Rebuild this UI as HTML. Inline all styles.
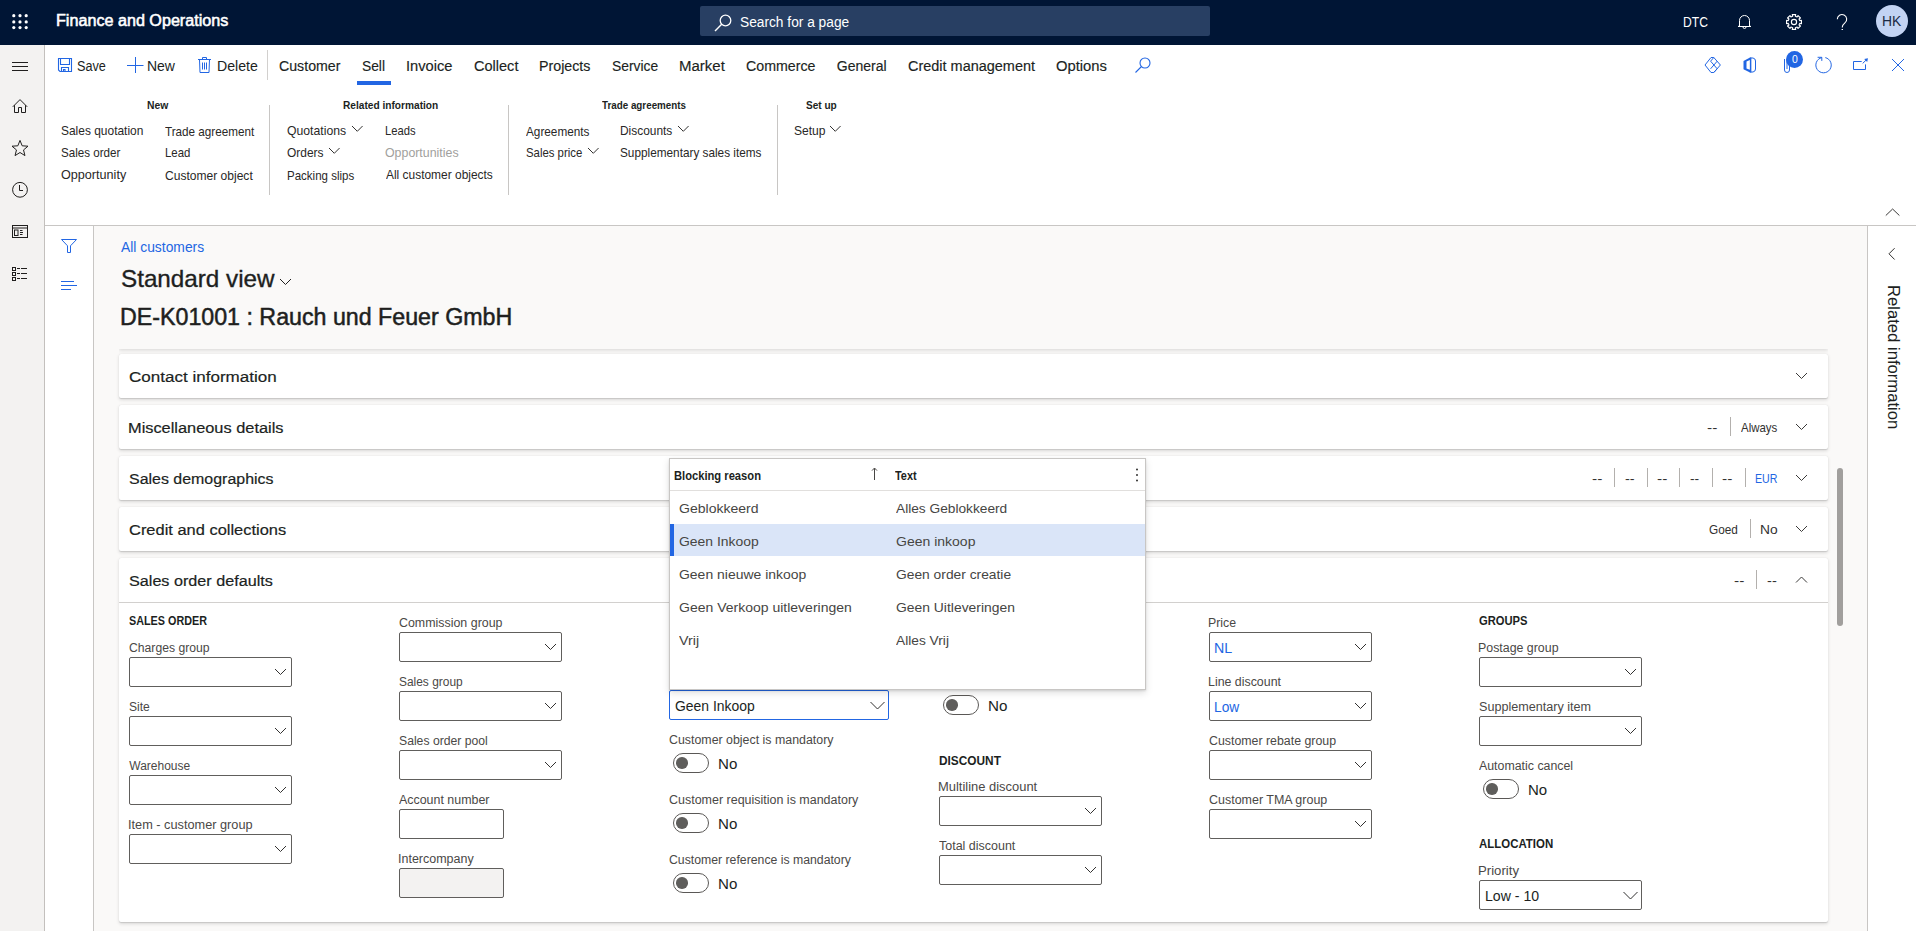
<!DOCTYPE html>
<html><head><meta charset="utf-8"><title>Finance and Operations</title>
<style>
html,body{margin:0;padding:0}
body{width:1916px;height:931px;position:relative;overflow:hidden;background:#faf9f8;font-family:"Liberation Sans",sans-serif}
.t{position:absolute;white-space:nowrap;line-height:1;transform-origin:0 0}
svg{overflow:visible}
</style></head><body>
<div style="position:absolute;left:0px;top:0px;width:1916px;height:45px;background:#001535"></div>
<svg style="position:absolute;left:0px;top:0px;" width="40" height="45" viewBox="0 0 40 45"><circle cx="13.8" cy="15.7" r="1.6" fill="#fff"/><circle cx="13.8" cy="21.9" r="1.6" fill="#fff"/><circle cx="13.8" cy="27.6" r="1.6" fill="#fff"/><circle cx="20" cy="15.7" r="1.6" fill="#fff"/><circle cx="20" cy="21.9" r="1.6" fill="#fff"/><circle cx="20" cy="27.6" r="1.6" fill="#fff"/><circle cx="26.2" cy="15.7" r="1.6" fill="#fff"/><circle cx="26.2" cy="21.9" r="1.6" fill="#fff"/><circle cx="26.2" cy="27.6" r="1.6" fill="#fff"/></svg>
<div class="t" style="left:55.71px;top:12.85px;font-size:16px;font-weight:normal;color:#fff;transform:scaleX(1.0091);-webkit-text-stroke:0.55px #fff;">Finance and Operations</div>
<div style="position:absolute;left:700px;top:6px;width:510px;height:30px;background:#283f63;border-radius:2px"></div>
<svg style="position:absolute;left:712px;top:13px;" width="22" height="20" viewBox="0 0 22 20"><circle cx="13.5" cy="7.5" r="5.3" fill="none" stroke="#fff" stroke-width="1.3"/><line x1="9.7" y1="11.3" x2="3" y2="18" stroke="#fff" stroke-width="1.4"/></svg>
<div class="t" style="left:739.51px;top:15.04px;font-size:14px;font-weight:normal;color:#fff;transform:scaleX(0.9809);">Search for a page</div>
<div class="t" style="left:1683.03px;top:15.14px;font-size:14px;font-weight:normal;color:#fff;transform:scaleX(0.8660);">DTC</div>
<svg style="position:absolute;left:1730px;top:5px;" width="30" height="30" viewBox="0 0 30 30"><path d="M9.5 21 V15.5 a5 5 0 0 1 10 0 V21 l1.5 0.5 H8 Z" fill="none" stroke="#fff" stroke-width="1" stroke-linejoin="round"/><path d="M13 22 a1.5 1.5 0 0 0 3 0" fill="none" stroke="#fff" stroke-width="1"/></svg>
<svg style="position:absolute;left:1782.5px;top:11px;" width="22" height="22" viewBox="0 0 22 22"><path d="M9.29 3.59 L12.71 3.59 L12.38 5.26 L14.08 5.97 L15.03 4.55 L17.45 6.97 L16.03 7.92 L16.74 9.62 L18.41 9.29 L18.41 12.71 L16.74 12.38 L16.03 14.08 L17.45 15.03 L15.03 17.45 L14.08 16.03 L12.38 16.74 L12.71 18.41 L9.29 18.41 L9.62 16.74 L7.92 16.03 L6.97 17.45 L4.55 15.03 L5.97 14.08 L5.26 12.38 L3.59 12.71 L3.59 9.29 L5.26 9.62 L5.97 7.92 L4.55 6.97 L6.97 4.55 L7.92 5.97 L9.62 5.26 Z" fill="none" stroke="#fff" stroke-width="1.15" stroke-linejoin="round"/><circle cx="11" cy="11" r="2.6" fill="none" stroke="#fff" stroke-width="1.15"/></svg>
<svg style="position:absolute;left:1834px;top:13px;" width="16" height="22" viewBox="0 0 16 22"><path d="M3.3 6.2 a4.7 4.7 0 1 1 7.6 3.7 c-1.6 1.3 -2.6 2.2 -2.6 4.2 V14.5" fill="none" stroke="#fff" stroke-width="1.1"/><path d="M7.6 16.5 H9" stroke="#fff" stroke-width="1.2"/></svg>
<div style="position:absolute;left:1876px;top:5px;width:32px;height:32px;background:#c2d3f3;border-radius:50%"></div>
<div class="t" style="left:1882.39px;top:14.44px;font-size:14px;font-weight:normal;color:#1b2a45;transform:scaleX(0.9911);">HK</div>
<div style="position:absolute;left:0px;top:45px;width:44px;height:886px;background:#f3f2f1"></div>
<div style="position:absolute;left:44px;top:45px;width:1px;height:886px;background:#c3c0bd"></div>
<svg style="position:absolute;left:0px;top:45px;" width="44" height="250" viewBox="0 0 44 250"><g transform="translate(0,-45)"><path d="M12 62.5 H28 M12 66.5 H28 M12 70.5 H28" fill="none" stroke="#201f1e" stroke-width="1"/><path d="M12.8 106.8 L20 99.6 L27.2 106.8 M14.5 105.2 V112.5 H18.5 V107.5 H21.5 V112.5 H25.5 V105.2" fill="none" stroke="#201f1e" stroke-width="1"/><path d="M20.00 140.40 L22.17 145.81 L27.99 146.20 L23.52 149.94 L24.94 155.60 L20.00 152.50 L15.06 155.60 L16.48 149.94 L12.01 146.20 L17.83 145.81 Z" fill="none" stroke="#201f1e" stroke-width="1" stroke-linejoin="miter"/><circle cx="20" cy="189.8" r="7.4" fill="none" stroke="#201f1e" stroke-width="1"/><path d="M19.5 185 V190.5 H23" fill="none" stroke="#201f1e" stroke-width="1"/><rect x="12.5" y="225.5" width="15" height="12" fill="none" stroke="#201f1e" stroke-width="1"/><path d="M12.5 228 H27.5" fill="none" stroke="#201f1e" stroke-width="1"/><rect x="14.5" y="230" width="3.5" height="5.5" fill="none" stroke="#201f1e" stroke-width="1"/><path d="M20 230.5 H22.5 M20 232.5 H23 M20 234.5 H22.5" fill="none" stroke="#201f1e" stroke-width="1"/><rect x="12.5" y="267.5" width="3" height="3" fill="none" stroke="#201f1e" stroke-width="1"/><rect x="12.5" y="272.5" width="3" height="3" fill="none" stroke="#201f1e" stroke-width="1"/><rect x="12.5" y="277.5" width="3" height="3" fill="none" stroke="#201f1e" stroke-width="1"/><path d="M17 268.5 H20 M21 268.5 H27 M17 273.5 H20 M21 273.5 H27 M17 278.5 H20 M21 278.5 H27" fill="none" stroke="#201f1e" stroke-width="1"/></g></svg>
<div style="position:absolute;left:45px;top:45px;width:1871px;height:180px;background:#fff"></div>
<div style="position:absolute;left:45px;top:225px;width:1871px;height:1px;background:#c8c6c4"></div>
<svg style="position:absolute;left:56px;top:56px;" width="18" height="18" viewBox="0 0 18 18"><path d="M2.5 2.5 H15.5 V15.5 H4 L2.5 14 Z" fill="none" stroke="#2266e3" stroke-width="1.1"/><path d="M4.5 2.5 V8.5 H13.5 V2.5" fill="none" stroke="#2266e3" stroke-width="1.1"/><path d="M5.5 15.5 V11.5 H12.5 V15.5" fill="none" stroke="#2266e3" stroke-width="1.1"/><path d="M7.5 15.5 V13.5 H9 V15.5" fill="none" stroke="#2266e3" stroke-width="1.1"/></svg>
<div class="t" style="left:76.97px;top:59.04px;font-size:14px;font-weight:normal;color:#201f1e;transform:scaleX(0.9043);">Save</div>
<svg style="position:absolute;left:125px;top:55px;" width="20" height="20" viewBox="0 0 20 20"><path d="M10.5 2 V18 M2 10.5 H18.5" fill="none" stroke="#2266e3" stroke-width="1"/></svg>
<div class="t" style="left:146.88px;top:59.04px;font-size:14px;font-weight:normal;color:#201f1e;">New</div>
<svg style="position:absolute;left:196px;top:56px;" width="18" height="18" viewBox="0 0 18 18"><path d="M2 3.5 H15 M6.5 3.5 V1.5 H10.5 V3.5 M3.5 3.5 L4 16.5 H13 L13.5 3.5 M6.5 6.5 V13.5 M8.5 6.5 V13.5 M10.5 6.5 V13.5" fill="none" stroke="#2266e3" stroke-width="1"/></svg>
<div class="t" style="left:216.87px;top:59.04px;font-size:14px;font-weight:normal;color:#201f1e;transform:scaleX(1.0093);">Delete</div>
<div style="position:absolute;left:267px;top:50px;width:1px;height:30px;background:#d2d0ce"></div>
<div class="t" style="left:278.99px;top:58.94px;font-size:14px;font-weight:normal;color:#201f1e;transform:scaleX(1.0120);-webkit-text-stroke:0.15px currentColor;">Customer</div>
<div class="t" style="left:362.31px;top:58.94px;font-size:14px;font-weight:normal;color:#201f1e;transform:scaleX(0.9844);-webkit-text-stroke:0.15px currentColor;">Sell</div>
<div class="t" style="left:406.18px;top:58.94px;font-size:14px;font-weight:normal;color:#201f1e;transform:scaleX(1.0490);-webkit-text-stroke:0.15px currentColor;">Invoice</div>
<div class="t" style="left:473.67px;top:58.94px;font-size:14px;font-weight:normal;color:#201f1e;transform:scaleX(1.0381);-webkit-text-stroke:0.15px currentColor;">Collect</div>
<div class="t" style="left:539.06px;top:58.94px;font-size:14px;font-weight:normal;color:#201f1e;transform:scaleX(1.0163);-webkit-text-stroke:0.15px currentColor;">Projects</div>
<div class="t" style="left:611.91px;top:58.94px;font-size:14px;font-weight:normal;color:#201f1e;transform:scaleX(0.9877);-webkit-text-stroke:0.15px currentColor;">Service</div>
<div class="t" style="left:679.00px;top:58.94px;font-size:14px;font-weight:normal;color:#201f1e;transform:scaleX(1.0702);-webkit-text-stroke:0.15px currentColor;">Market</div>
<div class="t" style="left:746.49px;top:58.94px;font-size:14px;font-weight:normal;color:#201f1e;transform:scaleX(1.0140);-webkit-text-stroke:0.15px currentColor;">Commerce</div>
<div class="t" style="left:836.80px;top:58.94px;font-size:14px;font-weight:normal;color:#201f1e;-webkit-text-stroke:0.15px currentColor;">General</div>
<div class="t" style="left:907.58px;top:58.94px;font-size:14px;font-weight:normal;color:#201f1e;transform:scaleX(1.0329);-webkit-text-stroke:0.15px currentColor;">Credit management</div>
<div class="t" style="left:1055.96px;top:58.94px;font-size:14px;font-weight:normal;color:#201f1e;transform:scaleX(1.0555);-webkit-text-stroke:0.15px currentColor;">Options</div>
<div style="position:absolute;left:357px;top:81px;width:34px;height:4px;background:#2266e3"></div>
<svg style="position:absolute;left:1133px;top:56px;" width="20" height="18" viewBox="0 0 20 18"><circle cx="12" cy="7" r="5" fill="none" stroke="#2266e3" stroke-width="1.1"/><path d="M8.5 10.5 L2.5 16.5" fill="none" stroke="#2266e3" stroke-width="1.1"/></svg>
<svg style="position:absolute;left:1700px;top:50px;" width="26" height="28" viewBox="0 0 26 28"><path d="M11 7.5 L5 15 L11 22.5 M13.8 7.5 L20.4 15 L13.8 22.5 M13.8 7.5 L10.6 11.2 L17.2 18.8 L13.8 22.5 M10.6 18.8 L17.2 11.2 M11 7.5 H13.8 M11 22.5 H13.8" fill="none" stroke="#2266e3" stroke-width="1" stroke-linejoin="round"/></svg>
<svg style="position:absolute;left:1740px;top:50px;" width="20" height="28" viewBox="0 0 20 28"><path d="M3.5 11 L10.5 7.3 V9.8 L6.5 11.5 V18.5 L3.5 19.2 Z M3.5 19.2 L10.5 22.7 V20 L6.5 18.5 Z" fill="#2266e3"/><path d="M10.5 8 H13 Q15.5 8.5 15.5 11 V19 Q15.5 21.5 13 22 H10.5" fill="none" stroke="#2266e3" stroke-width="1"/><path d="M10.6 7.5 V22.5" stroke="#2266e3" stroke-width="1.5"/></svg>
<svg style="position:absolute;left:1778px;top:50px;" width="16" height="28" viewBox="0 0 16 28"><path d="M6.5 9 V20 a2.5 2.5 0 0 0 5 0 V12 M9 9.5 V19" fill="none" stroke="#2266e3" stroke-width="1"/></svg>
<div style="position:absolute;left:1786px;top:51px;width:17px;height:17px;background:#2266e3;border-radius:50%"></div>
<div class="t" style="left:1791.58px;top:54.73px;font-size:10px;font-weight:normal;color:#fff;transform:scaleX(1.0417);">0</div>
<svg style="position:absolute;left:1810px;top:50px;" width="26" height="28" viewBox="0 0 26 28"><path d="M15.3 7.6 A7.7 7.7 0 1 1 11.8 7.6" fill="none" stroke="#2266e3" stroke-width="1"/><path d="M7.6 7.3 H11.8 V10.9" fill="none" stroke="#2266e3" stroke-width="1"/></svg>
<svg style="position:absolute;left:1850px;top:50px;" width="22" height="28" viewBox="0 0 22 28"><path d="M11.7 11.5 H3.5 V19.5 H15.5 V14.4" fill="none" stroke="#2266e3" stroke-width="1"/><path d="M12.7 13.4 L17 9.2" fill="none" stroke="#2266e3" stroke-width="1"/><path d="M18 8.2 L14.2 9 L17.2 12 Z" fill="#2266e3"/></svg>
<svg style="position:absolute;left:1888px;top:56px;" width="18" height="18" viewBox="0 0 18 18"><path d="M4 3 L16 15 M16 3 L4 15" fill="none" stroke="#2266e3" stroke-width="1"/></svg>
<svg style="position:absolute;left:1884px;top:205px;" width="18" height="14" viewBox="0 0 18 14"><path d="M1.8 10.5 L8.6 4 L15.4 10.5" fill="none" stroke="#3b3a39" stroke-width="1"/></svg>
<div class="t" style="left:146.68px;top:100.11px;font-size:10.5px;font-weight:bold;color:#201f1e;transform:scaleX(0.9859);">New</div>
<div class="t" style="left:342.69px;top:100.11px;font-size:10.5px;font-weight:bold;color:#201f1e;transform:scaleX(0.9658);">Related information</div>
<div class="t" style="left:601.90px;top:100.11px;font-size:10.5px;font-weight:bold;color:#201f1e;transform:scaleX(0.9345);">Trade agreements</div>
<div class="t" style="left:805.70px;top:100.11px;font-size:10.5px;font-weight:bold;color:#201f1e;transform:scaleX(0.9588);">Set up</div>
<div class="t" style="left:60.80px;top:124.19px;font-size:13px;font-weight:normal;color:#292827;transform:scaleX(0.9190);">Sales quotation</div>
<div class="t" style="left:60.82px;top:146.19px;font-size:13px;font-weight:normal;color:#292827;transform:scaleX(0.8926);">Sales order</div>
<div class="t" style="left:60.77px;top:168.19px;font-size:13px;font-weight:normal;color:#292827;transform:scaleX(0.9706);">Opportunity</div>
<div class="t" style="left:165.17px;top:125.19px;font-size:13px;font-weight:normal;color:#292827;transform:scaleX(0.8996);">Trade agreement</div>
<div class="t" style="left:165.29px;top:146.19px;font-size:13px;font-weight:normal;color:#292827;transform:scaleX(0.8765);">Lead</div>
<div class="t" style="left:164.80px;top:169.19px;font-size:13px;font-weight:normal;color:#292827;transform:scaleX(0.9269);">Customer object</div>
<div style="position:absolute;left:269px;top:105px;width:1px;height:90px;background:#c8c6c4"></div>
<div class="t" style="left:287.09px;top:124.19px;font-size:13px;font-weight:normal;color:#292827;transform:scaleX(0.9405);">Quotations</div>
<svg style="position:absolute;left:351px;top:125px;" width="12.6" height="7.3" viewBox="0 0 12.6 7.3"><path d="M1 1 L6.3 6.3 L11.6 1" fill="none" stroke="#323130" stroke-width="1"/></svg>
<div class="t" style="left:287.10px;top:146.19px;font-size:13px;font-weight:normal;color:#292827;transform:scaleX(0.9189);">Orders</div>
<svg style="position:absolute;left:328px;top:147px;" width="12.6" height="7.3" viewBox="0 0 12.6 7.3"><path d="M1 1 L6.3 6.3 L11.6 1" fill="none" stroke="#323130" stroke-width="1"/></svg>
<div class="t" style="left:287.08px;top:169.19px;font-size:13px;font-weight:normal;color:#292827;transform:scaleX(0.8860);">Packing slips</div>
<div class="t" style="left:385.10px;top:124.19px;font-size:13px;font-weight:normal;color:#292827;transform:scaleX(0.8635);">Leads</div>
<div class="t" style="left:385.38px;top:146.19px;font-size:13px;font-weight:normal;color:#a19f9d;transform:scaleX(0.9514);">Opportunities</div>
<div class="t" style="left:386.00px;top:168.19px;font-size:13px;font-weight:normal;color:#292827;transform:scaleX(0.9184);">All customer objects</div>
<div style="position:absolute;left:508px;top:105px;width:1px;height:90px;background:#c8c6c4"></div>
<div class="t" style="left:526.40px;top:125.19px;font-size:13px;font-weight:normal;color:#292827;transform:scaleX(0.9056);">Agreements</div>
<div class="t" style="left:525.83px;top:146.19px;font-size:13px;font-weight:normal;color:#292827;transform:scaleX(0.8739);">Sales price</div>
<svg style="position:absolute;left:587px;top:147px;" width="12.6" height="7.3" viewBox="0 0 12.6 7.3"><path d="M1 1 L6.3 6.3 L11.6 1" fill="none" stroke="#323130" stroke-width="1"/></svg>
<div class="t" style="left:620.05px;top:124.19px;font-size:13px;font-weight:normal;color:#292827;transform:scaleX(0.9166);">Discounts</div>
<svg style="position:absolute;left:677px;top:125px;" width="12.6" height="7.3" viewBox="0 0 12.6 7.3"><path d="M1 1 L6.3 6.3 L11.6 1" fill="none" stroke="#323130" stroke-width="1"/></svg>
<div class="t" style="left:620.41px;top:146.19px;font-size:13px;font-weight:normal;color:#292827;transform:scaleX(0.9067);">Supplementary sales items</div>
<div style="position:absolute;left:777px;top:105px;width:1px;height:90px;background:#c8c6c4"></div>
<div class="t" style="left:793.90px;top:124.19px;font-size:13px;font-weight:normal;color:#292827;transform:scaleX(0.9273);">Setup</div>
<svg style="position:absolute;left:829px;top:125px;" width="12.6" height="7.3" viewBox="0 0 12.6 7.3"><path d="M1 1 L6.3 6.3 L11.6 1" fill="none" stroke="#323130" stroke-width="1"/></svg>
<div style="position:absolute;left:45px;top:226px;width:49px;height:705px;background:#fff"></div>
<div style="position:absolute;left:93px;top:226px;width:1px;height:705px;background:#c8c6c4"></div>
<div style="position:absolute;left:1867px;top:226px;width:1px;height:705px;background:#c8c6c4"></div>
<div style="position:absolute;left:1868px;top:226px;width:48px;height:705px;background:#fff"></div>
<svg style="position:absolute;left:59px;top:236px;" width="20" height="20" viewBox="0 0 20 20"><path d="M2.5 3.5 H17.5 L11.5 9.8 V16.5 H8.5 V9.8 Z" fill="none" stroke="#2266e3" stroke-width="1" stroke-linejoin="miter"/></svg>
<svg style="position:absolute;left:59px;top:278px;" width="20" height="16" viewBox="0 0 20 16"><path d="M2 3.5 H15 M2 7.5 H18 M2 11.5 H12" fill="none" stroke="#2266e3" stroke-width="1"/></svg>
<svg style="position:absolute;left:1884px;top:246px;" width="14" height="16" viewBox="0 0 14 16"><path d="M10.6 2.2 L5 7.8 L10.6 13.5" fill="none" stroke="#323130" stroke-width="1"/></svg>
<div class="t" style="left:1900.5px;top:284.8px;font-size:16px;color:#201f1e;transform-origin:0 0;transform:rotate(90deg) scaleX(1.04);white-space:nowrap">Related information</div>
<div class="t" style="left:120.60px;top:240.04px;font-size:14px;font-weight:normal;color:#2266e3;transform:scaleX(0.9895);">All customers</div>
<div class="t" style="left:120.59px;top:266.98px;font-size:24px;font-weight:normal;color:#201f1e;transform:scaleX(1.0095);-webkit-text-stroke:0.35px currentColor;">Standard view</div>
<svg style="position:absolute;left:279px;top:277.5px;" width="13" height="7.5" viewBox="0 0 13 7.5"><path d="M1 1 L6.5 6.5 L12 1" fill="none" stroke="#201f1e" stroke-width="1"/></svg>
<div class="t" style="left:119.54px;top:306.30px;font-size:23.5px;font-weight:normal;color:#201f1e;transform:scaleX(0.9879);-webkit-text-stroke:0.5px currentColor;">DE-K01001 : Rauch und Feuer GmbH</div>
<div style="position:absolute;left:119px;top:330px;width:1709px;height:18.5px;background:#faf9f8;box-shadow:0 1.6px 3.6px rgba(0,0,0,.13),0 .3px .9px rgba(0,0,0,.11);clip-path:inset(18px 0 -10px 0)"></div>
<div style="position:absolute;left:119px;top:354px;width:1709px;height:44px;background:#fff;border-radius:2px;box-shadow:0 1.6px 3.6px rgba(0,0,0,.13),0 .3px .9px rgba(0,0,0,.11)"></div>
<div class="t" style="left:128.55px;top:369.07px;font-size:15.5px;font-weight:normal;color:#201f1e;transform:scaleX(1.0987);-webkit-text-stroke:0.2px currentColor;">Contact information</div>
<svg style="position:absolute;left:1795.2px;top:372.3px;" width="14" height="8" viewBox="0 0 14 8"><path d="M1 1 L6.5 6.5 L12 1" fill="none" stroke="#3b3a39" stroke-width="1"/></svg>
<div style="position:absolute;left:119px;top:405px;width:1709px;height:44px;background:#fff;border-radius:2px;box-shadow:0 1.6px 3.6px rgba(0,0,0,.13),0 .3px .9px rgba(0,0,0,.11)"></div>
<div class="t" style="left:128.09px;top:420.07px;font-size:15.5px;font-weight:normal;color:#201f1e;transform:scaleX(1.0553);-webkit-text-stroke:0.2px currentColor;">Miscellaneous details</div>
<svg style="position:absolute;left:1795.2px;top:423.3px;" width="14" height="8" viewBox="0 0 14 8"><path d="M1 1 L6.5 6.5 L12 1" fill="none" stroke="#3b3a39" stroke-width="1"/></svg>
<div style="position:absolute;left:119px;top:456px;width:1709px;height:44px;background:#fff;border-radius:2px;box-shadow:0 1.6px 3.6px rgba(0,0,0,.13),0 .3px .9px rgba(0,0,0,.11)"></div>
<div class="t" style="left:128.60px;top:471.07px;font-size:15.5px;font-weight:normal;color:#201f1e;transform:scaleX(1.0288);-webkit-text-stroke:0.2px currentColor;">Sales demographics</div>
<svg style="position:absolute;left:1795.2px;top:474.3px;" width="14" height="8" viewBox="0 0 14 8"><path d="M1 1 L6.5 6.5 L12 1" fill="none" stroke="#3b3a39" stroke-width="1"/></svg>
<div style="position:absolute;left:119px;top:507px;width:1709px;height:44px;background:#fff;border-radius:2px;box-shadow:0 1.6px 3.6px rgba(0,0,0,.13),0 .3px .9px rgba(0,0,0,.11)"></div>
<div class="t" style="left:128.58px;top:522.07px;font-size:15.5px;font-weight:normal;color:#201f1e;transform:scaleX(1.0610);-webkit-text-stroke:0.2px currentColor;">Credit and collections</div>
<svg style="position:absolute;left:1795.2px;top:525.3px;" width="14" height="8" viewBox="0 0 14 8"><path d="M1 1 L6.5 6.5 L12 1" fill="none" stroke="#3b3a39" stroke-width="1"/></svg>
<div style="position:absolute;left:119px;top:558px;width:1709px;height:364px;background:#fff;border-radius:2px;box-shadow:0 1.6px 3.6px rgba(0,0,0,.13),0 .3px .9px rgba(0,0,0,.11)"></div>
<div class="t" style="left:128.59px;top:573.07px;font-size:15.5px;font-weight:normal;color:#201f1e;transform:scaleX(1.0435);-webkit-text-stroke:0.2px currentColor;">Sales order defaults</div>
<svg style="position:absolute;left:1795.2px;top:576.3px;" width="14" height="8" viewBox="0 0 14 8"><path d="M1 6.5 L6.5 1 L12 6.5" fill="none" stroke="#3b3a39" stroke-width="1"/></svg>
<div style="position:absolute;left:119px;top:602px;width:1709px;height:1px;background:#d2d0ce"></div>
<div class="t" style="left:1707.38px;top:420.99px;font-size:13px;font-weight:normal;color:#323130;transform:scaleX(1.1936);">--</div>
<div style="position:absolute;left:1730px;top:417px;width:1px;height:19px;background:#b3b0ad"></div>
<div class="t" style="left:1741.00px;top:420.99px;font-size:13px;font-weight:normal;color:#323130;transform:scaleX(0.8819);">Always</div>
<div class="t" style="left:1591.98px;top:471.99px;font-size:13px;font-weight:normal;color:#323130;transform:scaleX(1.1936);">--</div>
<div class="t" style="left:1625.02px;top:471.99px;font-size:13px;font-weight:normal;color:#323130;transform:scaleX(1.1141);">--</div>
<div class="t" style="left:1657.38px;top:471.99px;font-size:13px;font-weight:normal;color:#323130;transform:scaleX(1.1936);">--</div>
<div class="t" style="left:1690.45px;top:471.99px;font-size:13px;font-weight:normal;color:#323130;transform:scaleX(1.0610);">--</div>
<div class="t" style="left:1722.38px;top:471.99px;font-size:13px;font-weight:normal;color:#323130;transform:scaleX(1.1936);">--</div>
<div style="position:absolute;left:1614px;top:468px;width:1px;height:19px;background:#b3b0ad"></div>
<div style="position:absolute;left:1647px;top:468px;width:1px;height:19px;background:#b3b0ad"></div>
<div style="position:absolute;left:1679px;top:468px;width:1px;height:19px;background:#b3b0ad"></div>
<div style="position:absolute;left:1712px;top:468px;width:1px;height:19px;background:#b3b0ad"></div>
<div style="position:absolute;left:1745px;top:468px;width:1px;height:19px;background:#b3b0ad"></div>
<div class="t" style="left:1755.15px;top:471.99px;font-size:13px;font-weight:normal;color:#2266e3;transform:scaleX(0.8159);">EUR</div>
<div class="t" style="left:1708.91px;top:522.99px;font-size:13px;font-weight:normal;color:#323130;transform:scaleX(0.9079);">Goed</div>
<div style="position:absolute;left:1750px;top:519px;width:1px;height:19px;background:#b3b0ad"></div>
<div class="t" style="left:1759.90px;top:522.99px;font-size:13px;font-weight:normal;color:#323130;transform:scaleX(1.0610);">No</div>
<div class="t" style="left:1734.38px;top:573.99px;font-size:13px;font-weight:normal;color:#323130;transform:scaleX(1.1936);">--</div>
<div style="position:absolute;left:1756px;top:570px;width:1px;height:19px;background:#b3b0ad"></div>
<div class="t" style="left:1767.41px;top:573.99px;font-size:13px;font-weight:normal;color:#323130;transform:scaleX(1.1273);">--</div>
<div style="position:absolute;left:1837px;top:468px;width:6px;height:158px;background:#a19f9d;border-radius:3px"></div>
<div class="t" style="left:128.98px;top:614.64px;font-size:12px;font-weight:bold;color:#201f1e;transform:scaleX(0.8996);">SALES ORDER</div>
<div class="t" style="left:128.69px;top:641.64px;font-size:12px;font-weight:normal;color:#4a4846;transform:scaleX(1.0145);">Charges group</div>
<div style="position:absolute;left:129px;top:657px;width:163px;height:30px;box-sizing:border-box;border:1px solid #605e5c;border-radius:2px;background:#fff"></div>
<svg style="position:absolute;left:273.5px;top:668.3px;" width="14" height="8" viewBox="0 0 14 8"><path d="M1 1 L6.5 6.5 L12 1" fill="none" stroke="#323130" stroke-width="1"/></svg>
<div class="t" style="left:128.70px;top:700.64px;font-size:12px;font-weight:normal;color:#4a4846;transform:scaleX(1.0072);">Site</div>
<div style="position:absolute;left:129px;top:716px;width:163px;height:30px;box-sizing:border-box;border:1px solid #605e5c;border-radius:2px;background:#fff"></div>
<svg style="position:absolute;left:273.5px;top:727.3px;" width="14" height="8" viewBox="0 0 14 8"><path d="M1 1 L6.5 6.5 L12 1" fill="none" stroke="#323130" stroke-width="1"/></svg>
<div class="t" style="left:129.30px;top:759.64px;font-size:12px;font-weight:normal;color:#4a4846;">Warehouse</div>
<div style="position:absolute;left:129px;top:775px;width:163px;height:30px;box-sizing:border-box;border:1px solid #605e5c;border-radius:2px;background:#fff"></div>
<svg style="position:absolute;left:273.5px;top:786.3px;" width="14" height="8" viewBox="0 0 14 8"><path d="M1 1 L6.5 6.5 L12 1" fill="none" stroke="#323130" stroke-width="1"/></svg>
<div class="t" style="left:128.15px;top:818.64px;font-size:12px;font-weight:normal;color:#4a4846;transform:scaleX(1.0613);">Item - customer group</div>
<div style="position:absolute;left:129px;top:834px;width:163px;height:30px;box-sizing:border-box;border:1px solid #605e5c;border-radius:2px;background:#fff"></div>
<svg style="position:absolute;left:273.5px;top:845.3px;" width="14" height="8" viewBox="0 0 14 8"><path d="M1 1 L6.5 6.5 L12 1" fill="none" stroke="#323130" stroke-width="1"/></svg>
<div class="t" style="left:398.78px;top:616.64px;font-size:12px;font-weight:normal;color:#4a4846;transform:scaleX(1.0343);">Commission group</div>
<div style="position:absolute;left:399px;top:632px;width:163px;height:30px;box-sizing:border-box;border:1px solid #605e5c;border-radius:2px;background:#fff"></div>
<svg style="position:absolute;left:543.5px;top:643.3px;" width="14" height="8" viewBox="0 0 14 8"><path d="M1 1 L6.5 6.5 L12 1" fill="none" stroke="#323130" stroke-width="1"/></svg>
<div class="t" style="left:398.80px;top:675.64px;font-size:12px;font-weight:normal;color:#4a4846;transform:scaleX(0.9937);">Sales group</div>
<div style="position:absolute;left:399px;top:691px;width:163px;height:30px;box-sizing:border-box;border:1px solid #605e5c;border-radius:2px;background:#fff"></div>
<svg style="position:absolute;left:543.5px;top:702.3px;" width="14" height="8" viewBox="0 0 14 8"><path d="M1 1 L6.5 6.5 L12 1" fill="none" stroke="#323130" stroke-width="1"/></svg>
<div class="t" style="left:398.79px;top:734.64px;font-size:12px;font-weight:normal;color:#4a4846;transform:scaleX(1.0158);">Sales order pool</div>
<div style="position:absolute;left:399px;top:750px;width:163px;height:30px;box-sizing:border-box;border:1px solid #605e5c;border-radius:2px;background:#fff"></div>
<svg style="position:absolute;left:543.5px;top:761.3px;" width="14" height="8" viewBox="0 0 14 8"><path d="M1 1 L6.5 6.5 L12 1" fill="none" stroke="#323130" stroke-width="1"/></svg>
<div class="t" style="left:399.40px;top:793.64px;font-size:12px;font-weight:normal;color:#4a4846;transform:scaleX(1.0351);">Account number</div>
<div style="position:absolute;left:399px;top:809px;width:105px;height:30px;box-sizing:border-box;border:1px solid #605e5c;border-radius:2px;background:#fff"></div>
<div class="t" style="left:398.28px;top:852.64px;font-size:12px;font-weight:normal;color:#4a4846;transform:scaleX(1.0413);">Intercompany</div>
<div style="position:absolute;left:399px;top:868px;width:105px;height:30px;box-sizing:border-box;border:1px solid #605e5c;border-radius:2px;background:#f3f2f1"></div>
<div style="position:absolute;left:669px;top:690px;width:220px;height:30px;box-sizing:border-box;border:1px solid #2266e3;border-radius:2px;background:#fff"></div>
<svg style="position:absolute;left:869px;top:700.6px;" width="18" height="10" viewBox="0 0 18 10"><path d="M1.5 1 L8.5 8 L15.5 1" fill="none" stroke="#323130" stroke-width="1"/></svg>
<div class="t" style="left:674.80px;top:699.14px;font-size:14px;font-weight:normal;color:#201f1e;transform:scaleX(0.9942);">Geen Inkoop</div>
<div class="t" style="left:668.58px;top:733.54px;font-size:12px;font-weight:normal;color:#4a4846;transform:scaleX(1.0317);">Customer object is mandatory</div>
<div style="position:absolute;left:673px;top:753px;width:36px;height:20px;box-sizing:border-box;border:1px solid #5a5856;border-radius:10px;background:#fff"></div>
<div style="position:absolute;left:676.2px;top:757px;width:11.5px;height:11.5px;border-radius:50%;background:#5f5e5c"></div>
<div class="t" style="left:718.29px;top:757.14px;font-size:14px;font-weight:normal;color:#201f1e;transform:scaleX(1.0776);">No</div>
<div class="t" style="left:668.58px;top:793.54px;font-size:12px;font-weight:normal;color:#4a4846;transform:scaleX(1.0395);">Customer requisition is mandatory</div>
<div style="position:absolute;left:673px;top:813px;width:36px;height:20px;box-sizing:border-box;border:1px solid #5a5856;border-radius:10px;background:#fff"></div>
<div style="position:absolute;left:676.2px;top:817px;width:11.5px;height:11.5px;border-radius:50%;background:#5f5e5c"></div>
<div class="t" style="left:718.29px;top:817.14px;font-size:14px;font-weight:normal;color:#201f1e;transform:scaleX(1.0776);">No</div>
<div class="t" style="left:668.59px;top:853.54px;font-size:12px;font-weight:normal;color:#4a4846;transform:scaleX(1.0215);">Customer reference is mandatory</div>
<div style="position:absolute;left:673px;top:873px;width:36px;height:20px;box-sizing:border-box;border:1px solid #5a5856;border-radius:10px;background:#fff"></div>
<div style="position:absolute;left:676.2px;top:877px;width:11.5px;height:11.5px;border-radius:50%;background:#5f5e5c"></div>
<div class="t" style="left:718.29px;top:877.14px;font-size:14px;font-weight:normal;color:#201f1e;transform:scaleX(1.0776);">No</div>
<div style="position:absolute;left:943px;top:695px;width:36px;height:20px;box-sizing:border-box;border:1px solid #5a5856;border-radius:10px;background:#fff"></div>
<div style="position:absolute;left:946.2px;top:699px;width:11.5px;height:11.5px;border-radius:50%;background:#5f5e5c"></div>
<div class="t" style="left:988.19px;top:699.14px;font-size:14px;font-weight:normal;color:#201f1e;transform:scaleX(1.0837);">No</div>
<div class="t" style="left:938.77px;top:754.64px;font-size:12px;font-weight:bold;color:#201f1e;transform:scaleX(0.9874);">DISCOUNT</div>
<div class="t" style="left:937.97px;top:781.04px;font-size:12px;font-weight:normal;color:#4a4846;transform:scaleX(1.0774);">Multiline discount</div>
<div style="position:absolute;left:939px;top:796px;width:163px;height:30px;box-sizing:border-box;border:1px solid #605e5c;border-radius:2px;background:#fff"></div>
<svg style="position:absolute;left:1083.5px;top:807.3px;" width="14" height="8" viewBox="0 0 14 8"><path d="M1 1 L6.5 6.5 L12 1" fill="none" stroke="#323130" stroke-width="1"/></svg>
<div class="t" style="left:938.75px;top:840.04px;font-size:12px;font-weight:normal;color:#4a4846;transform:scaleX(1.0400);">Total discount</div>
<div style="position:absolute;left:939px;top:855px;width:163px;height:30px;box-sizing:border-box;border:1px solid #605e5c;border-radius:2px;background:#fff"></div>
<svg style="position:absolute;left:1083.5px;top:866.3px;" width="14" height="8" viewBox="0 0 14 8"><path d="M1 1 L6.5 6.5 L12 1" fill="none" stroke="#323130" stroke-width="1"/></svg>
<div class="t" style="left:1208.21px;top:616.64px;font-size:12px;font-weight:normal;color:#4a4846;transform:scaleX(1.0271);">Price</div>
<div style="position:absolute;left:1209px;top:632px;width:163px;height:30px;box-sizing:border-box;border:1px solid #605e5c;border-radius:2px;background:#fff"></div>
<svg style="position:absolute;left:1353.5px;top:643.3px;" width="14" height="8" viewBox="0 0 14 8"><path d="M1 1 L6.5 6.5 L12 1" fill="none" stroke="#323130" stroke-width="1"/></svg>
<div class="t" style="left:1208.21px;top:675.64px;font-size:12px;font-weight:normal;color:#4a4846;transform:scaleX(1.0316);">Line discount</div>
<div style="position:absolute;left:1209px;top:691px;width:163px;height:30px;box-sizing:border-box;border:1px solid #605e5c;border-radius:2px;background:#fff"></div>
<svg style="position:absolute;left:1353.5px;top:702.3px;" width="14" height="8" viewBox="0 0 14 8"><path d="M1 1 L6.5 6.5 L12 1" fill="none" stroke="#323130" stroke-width="1"/></svg>
<div class="t" style="left:1208.58px;top:734.64px;font-size:12px;font-weight:normal;color:#4a4846;transform:scaleX(1.0294);">Customer rebate group</div>
<div style="position:absolute;left:1209px;top:750px;width:163px;height:30px;box-sizing:border-box;border:1px solid #605e5c;border-radius:2px;background:#fff"></div>
<svg style="position:absolute;left:1353.5px;top:761.3px;" width="14" height="8" viewBox="0 0 14 8"><path d="M1 1 L6.5 6.5 L12 1" fill="none" stroke="#323130" stroke-width="1"/></svg>
<div class="t" style="left:1208.58px;top:793.64px;font-size:12px;font-weight:normal;color:#4a4846;transform:scaleX(1.0390);">Customer TMA group</div>
<div style="position:absolute;left:1209px;top:809px;width:163px;height:30px;box-sizing:border-box;border:1px solid #605e5c;border-radius:2px;background:#fff"></div>
<svg style="position:absolute;left:1353.5px;top:820.3px;" width="14" height="8" viewBox="0 0 14 8"><path d="M1 1 L6.5 6.5 L12 1" fill="none" stroke="#323130" stroke-width="1"/></svg>
<div class="t" style="left:1214.36px;top:641.14px;font-size:14px;font-weight:normal;color:#2266e3;transform:scaleX(1.0160);">NL</div>
<div class="t" style="left:1214.20px;top:700.14px;font-size:14px;font-weight:normal;color:#2266e3;transform:scaleX(0.9821);">Low</div>
<div class="t" style="left:1478.85px;top:614.84px;font-size:12px;font-weight:bold;color:#201f1e;transform:scaleX(0.9331);">GROUPS</div>
<div class="t" style="left:1478.31px;top:641.84px;font-size:12px;font-weight:normal;color:#4a4846;transform:scaleX(1.0316);">Postage group</div>
<div style="position:absolute;left:1479px;top:657px;width:163px;height:30px;box-sizing:border-box;border:1px solid #605e5c;border-radius:2px;background:#fff"></div>
<svg style="position:absolute;left:1623.5px;top:668.3px;" width="14" height="8" viewBox="0 0 14 8"><path d="M1 1 L6.5 6.5 L12 1" fill="none" stroke="#323130" stroke-width="1"/></svg>
<div class="t" style="left:1478.67px;top:701.04px;font-size:12px;font-weight:normal;color:#4a4846;transform:scaleX(1.0507);">Supplementary item</div>
<div style="position:absolute;left:1479px;top:716px;width:163px;height:30px;box-sizing:border-box;border:1px solid #605e5c;border-radius:2px;background:#fff"></div>
<svg style="position:absolute;left:1623.5px;top:727.3px;" width="14" height="8" viewBox="0 0 14 8"><path d="M1 1 L6.5 6.5 L12 1" fill="none" stroke="#323130" stroke-width="1"/></svg>
<div class="t" style="left:1479.30px;top:760.34px;font-size:12px;font-weight:normal;color:#4a4846;transform:scaleX(1.0298);">Automatic cancel</div>
<div style="position:absolute;left:1483px;top:779px;width:36px;height:20px;box-sizing:border-box;border:1px solid #5a5856;border-radius:10px;background:#fff"></div>
<div style="position:absolute;left:1486.2px;top:783px;width:11.5px;height:11.5px;border-radius:50%;background:#5f5e5c"></div>
<div class="t" style="left:1528.40px;top:783.44px;font-size:14px;font-weight:normal;color:#201f1e;transform:scaleX(1.0714);">No</div>
<div class="t" style="left:1479.07px;top:838.44px;font-size:12px;font-weight:bold;color:#201f1e;transform:scaleX(0.9544);">ALLOCATION</div>
<div class="t" style="left:1478.25px;top:865.24px;font-size:12px;font-weight:normal;color:#4a4846;transform:scaleX(1.0974);">Priority</div>
<div style="position:absolute;left:1479px;top:880px;width:163px;height:30px;box-sizing:border-box;border:1px solid #605e5c;border-radius:2px;background:#fff"></div>
<svg style="position:absolute;left:1622px;top:890.6px;" width="18" height="10" viewBox="0 0 18 10"><path d="M1.5 1 L8.5 8 L15.5 1" fill="none" stroke="#323130" stroke-width="1"/></svg>
<div class="t" style="left:1484.87px;top:889.14px;font-size:14px;font-weight:normal;color:#201f1e;transform:scaleX(1.0081);">Low - 10</div>
<div style="position:absolute;left:669px;top:458px;width:477px;height:232px;box-sizing:border-box;background:#fff;border:1px solid #c8c6c4;box-shadow:0 3.2px 7.2px rgba(0,0,0,.13),0 .6px 1.8px rgba(0,0,0,.11)"></div>
<div class="t" style="left:673.92px;top:469.74px;font-size:12px;font-weight:bold;color:#201f1e;transform:scaleX(0.9314);">Blocking reason</div>
<svg style="position:absolute;left:869px;top:466px;" width="10" height="16" viewBox="0 0 10 16"><path d="M5.5 14 V2.3 M3 4.6 L5.5 2 L8 4.6" fill="none" stroke="#484644" stroke-width="1"/></svg>
<div class="t" style="left:895.19px;top:469.74px;font-size:12px;font-weight:bold;color:#201f1e;transform:scaleX(0.9099);">Text</div>
<svg style="position:absolute;left:1132px;top:466px;" width="10" height="18" viewBox="0 0 10 18"><circle cx="5" cy="3.5" r="1" fill="#323130"/><circle cx="5" cy="9" r="1" fill="#323130"/><circle cx="5" cy="14.5" r="1" fill="#323130"/></svg>
<div style="position:absolute;left:670px;top:490px;width:475px;height:1px;background:#e1dfdd"></div>
<div style="position:absolute;left:670px;top:524px;width:475px;height:32px;background:#dae5f8"></div>
<div style="position:absolute;left:670px;top:524px;width:4px;height:32px;background:#2266e3"></div>
<div class="t" style="left:678.60px;top:502.08px;font-size:13.6px;font-weight:normal;color:#464543;transform:scaleX(1.0321);">Geblokkeerd</div>
<div class="t" style="left:896.20px;top:502.08px;font-size:13.6px;font-weight:normal;color:#464543;transform:scaleX(1.0084);">Alles Geblokkeerd</div>
<div class="t" style="left:678.60px;top:535.08px;font-size:13.6px;font-weight:normal;color:#464543;transform:scaleX(1.0247);">Geen Inkoop</div>
<div class="t" style="left:895.50px;top:535.08px;font-size:13.6px;font-weight:normal;color:#464543;transform:scaleX(1.0305);">Geen inkoop</div>
<div class="t" style="left:678.60px;top:568.08px;font-size:13.6px;font-weight:normal;color:#464543;transform:scaleX(1.0268);">Geen nieuwe inkoop</div>
<div class="t" style="left:895.51px;top:568.08px;font-size:13.6px;font-weight:normal;color:#464543;transform:scaleX(1.0155);">Geen order creatie</div>
<div class="t" style="left:678.60px;top:601.08px;font-size:13.6px;font-weight:normal;color:#464543;transform:scaleX(1.0301);">Geen Verkoop uitleveringen</div>
<div class="t" style="left:895.51px;top:601.08px;font-size:13.6px;font-weight:normal;color:#464543;transform:scaleX(1.0219);">Geen Uitleveringen</div>
<div class="t" style="left:679.30px;top:634.08px;font-size:13.6px;font-weight:normal;color:#464543;transform:scaleX(1.0512);">Vrij</div>
<div class="t" style="left:896.20px;top:634.08px;font-size:13.6px;font-weight:normal;color:#464543;transform:scaleX(1.0108);">Alles Vrij</div>
</body></html>
